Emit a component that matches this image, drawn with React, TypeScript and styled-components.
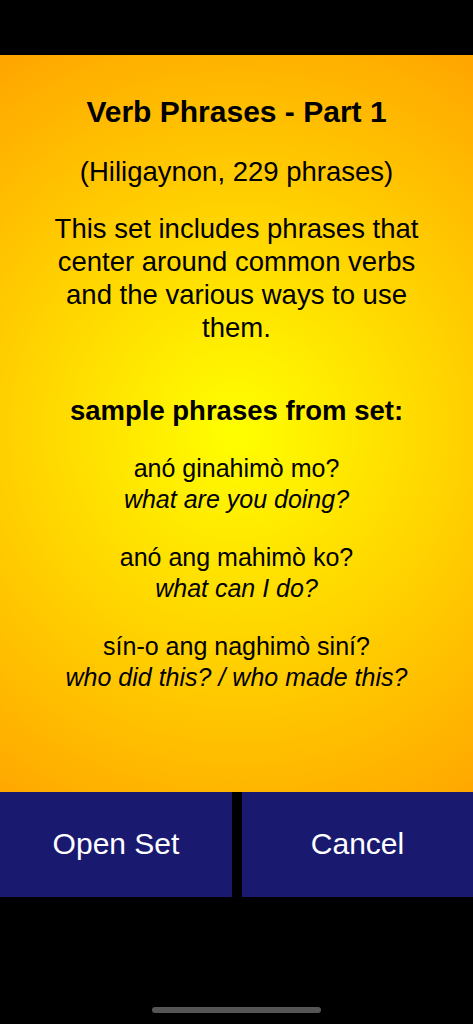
import { createGlobalStyle } from "styled-components";
import styled from "styled-components";

const GlobalStyle = createGlobalStyle`
  html, body {
    margin: 0;
    padding: 0;
    background: #000;
  }
  body {
    font-family: "Liberation Sans", Arial, sans-serif;
  }
`;

type Phrase = { native: string; english: string };

const phrases: Phrase[] = [
  { native: "anó ginahimò mo?", english: "what are you doing?" },
  { native: "anó ang mahimò ko?", english: "what can I do?" },
  { native: "sín-o ang naghimò siní?", english: "who did this? / who made this?" },
];

const App = () => {
  return (
    <Screen>
      <GlobalStyle />
      <StatusArea />
      <Panel>
        <Title>Verb Phrases - Part 1</Title>
        <Subtitle>(Hiligaynon, 229 phrases)</Subtitle>
        <Description>
          This set includes phrases that center around common verbs and the
          various ways to use them.
        </Description>
        <SampleHeading>sample phrases from set:</SampleHeading>
        <PhraseList>
          {phrases.map((p) => (
            <PhrasePair key={p.native}>
              <Native>{p.native}</Native>
              <English>{p.english}</English>
            </PhrasePair>
          ))}
        </PhraseList>
      </Panel>
      <ButtonRow>
        <ActionButton>Open Set</ActionButton>
        <ActionButton>Cancel</ActionButton>
      </ButtonRow>
      <Footer>
        <HomeIndicator />
      </Footer>
    </Screen>
  );
};

const Screen = styled.div`
  display: flex;
  flex-direction: column;
  min-height: 1024px;
  background: #000;
`;

const StatusArea = styled.div`
  height: 55px;
  flex-shrink: 0;
`;

const Panel = styled.div`
  height: 737px;
  box-sizing: border-box;
  padding: 39px 20px 0;
  display: flex;
  flex-direction: column;
  align-items: center;
  text-align: center;
  color: #000;
  background: radial-gradient(circle at 50% 51%, #ffff00 0%, #ffa500 100%);
`;

const Title = styled.h1`
  margin: 0 0 25px;
  font-size: 30px;
  line-height: 36px;
  font-weight: 700;
`;

const Subtitle = styled.p`
  margin: 0 0 24px;
  font-size: 27.5px;
  line-height: 33px;
`;

const Description = styled.p`
  margin: 0 0 50px;
  font-size: 27.5px;
  line-height: 33px;
  max-width: 400px;
`;

const SampleHeading = styled.h2`
  margin: 0 0 26px;
  font-size: 27.5px;
  line-height: 33px;
  font-weight: 700;
`;

const PhraseList = styled.div`
  display: flex;
  flex-direction: column;
  gap: 27px;
`;

const PhrasePair = styled.div`
  display: flex;
  flex-direction: column;
  font-size: 25px;
  line-height: 31px;
`;

const Native = styled.span``;

const English = styled.span`
  font-style: italic;
`;

const ButtonRow = styled.div`
  display: grid;
  grid-template-columns: 232px 1fr;
  column-gap: 10px;
  height: 105px;
  flex-shrink: 0;
`;

const ActionButton = styled.button`
  border: none;
  margin: 0;
  padding: 0 0 2px;
  background: #191970;
  color: #fff;
  font-family: "Liberation Sans", Arial, sans-serif;
  font-size: 30px;
  cursor: pointer;
`;

const Footer = styled.div`
  flex: 1;
  display: flex;
  justify-content: center;
  align-items: flex-end;
  padding-bottom: 11px;
`;

const HomeIndicator = styled.div`
  width: 169px;
  height: 6px;
  border-radius: 3px;
  background: #555;
`;

export default App;
